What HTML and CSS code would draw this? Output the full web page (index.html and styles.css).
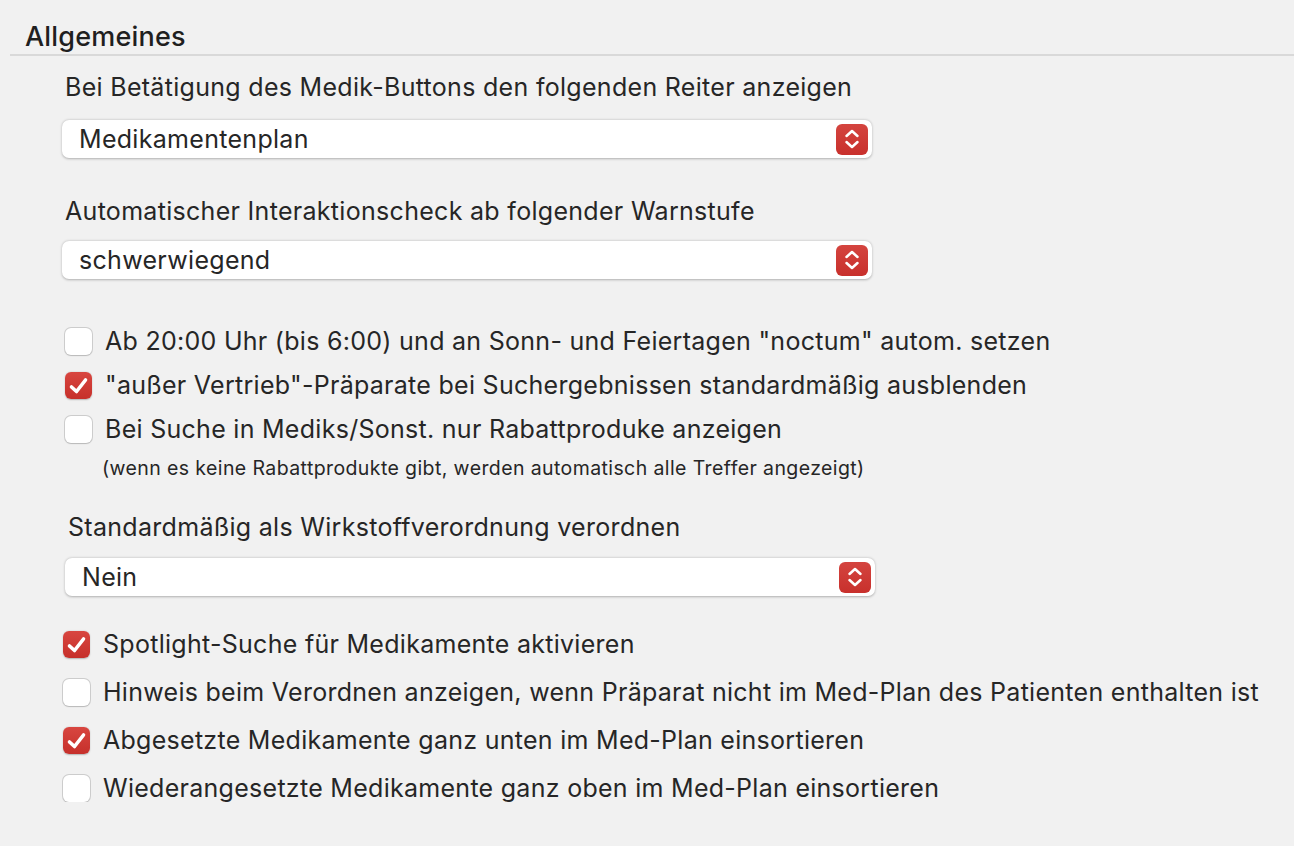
FILE: index.html
```html
<!DOCTYPE html>
<html lang="de">
  <head>
    <meta charset="UTF-8" />
    <title>Allgemeines</title>
    <link rel="stylesheet" href="styles.css">
  </head>
  <body>
    <div class="section">
      <h1 class="section-title">Allgemeines</h1>

      <div class="content">
        <div class="field first">
          <div class="label">Bei Betätigung des Medik-Buttons den folgenden Reiter anzeigen</div>
          <div class="popup">
            <span class="popup-value">Medikamentenplan</span>
            <span class="stepper">
              <svg width="18" height="22" viewBox="0 0 18 22"><path d="M3.5 8 L9 3 L14.5 8 M3.5 14 L9 19 L14.5 14" fill="none" stroke="#fff" stroke-width="2.5" stroke-linecap="round" stroke-linejoin="round"/></svg>
            </span>
          </div>
        </div>

        <div class="field second">
          <div class="label">Automatischer Interaktionscheck ab folgender Warnstufe</div>
          <div class="popup">
            <span class="popup-value">schwerwiegend</span>
            <span class="stepper">
              <svg width="18" height="22" viewBox="0 0 18 22"><path d="M3.5 8 L9 3 L14.5 8 M3.5 14 L9 19 L14.5 14" fill="none" stroke="#fff" stroke-width="2.5" stroke-linecap="round" stroke-linejoin="round"/></svg>
            </span>
          </div>
        </div>

        <!-- first checkbox group -->
        <div class="checks group-a">
          <label class="check">
            <span class="box"></span>
            <span>Ab 20:00 Uhr (bis 6:00) und an Sonn- und Feiertagen "noctum" autom. setzen</span>
          </label>
          <label class="check">
            <span class="box checked">
              <svg width="21" height="18" viewBox="0 0 21 18"><path d="M3.5 10 L8.5 14.5 L17.5 3" fill="none" stroke="#fff" stroke-width="3.6" stroke-linecap="round" stroke-linejoin="round"/></svg>
            </span>
            <span>"außer Vertrieb"-Präparate bei Suchergebnissen standardmäßig ausblenden</span>
          </label>
          <label class="check">
            <span class="box"></span>
            <span>Bei Suche in Mediks/Sonst. nur Rabattproduke anzeigen</span>
          </label>
          <div class="note">(wenn es keine Rabattprodukte gibt, werden automatisch alle Treffer angezeigt)</div>
        </div>

        <div class="field third">
          <div class="label">Standardmäßig als Wirkstoffverordnung verordnen</div>
          <div class="popup">
            <span class="popup-value">Nein</span>
            <span class="stepper">
              <svg width="18" height="22" viewBox="0 0 18 22"><path d="M3.5 8 L9 3 L14.5 8 M3.5 14 L9 19 L14.5 14" fill="none" stroke="#fff" stroke-width="2.5" stroke-linecap="round" stroke-linejoin="round"/></svg>
            </span>
          </div>
        </div>

        <!-- second checkbox group -->
        <div class="checks group-b">
          <label class="check">
            <span class="box checked">
              <svg width="21" height="18" viewBox="0 0 21 18"><path d="M3.5 10 L8.5 14.5 L17.5 3" fill="none" stroke="#fff" stroke-width="3.6" stroke-linecap="round" stroke-linejoin="round"/></svg>
            </span>
            <span>Spotlight-Suche für Medikamente aktivieren</span>
          </label>
          <label class="check">
            <span class="box"></span>
            <span>Hinweis beim Verordnen anzeigen, wenn Präparat nicht im Med-Plan des Patienten enthalten ist</span>
          </label>
          <label class="check">
            <span class="box checked">
              <svg width="21" height="18" viewBox="0 0 21 18"><path d="M3.5 10 L8.5 14.5 L17.5 3" fill="none" stroke="#fff" stroke-width="3.6" stroke-linecap="round" stroke-linejoin="round"/></svg>
            </span>
            <span>Abgesetzte Medikamente ganz unten im Med-Plan einsortieren</span>
          </label>
          <label class="check">
            <span class="box"></span>
            <span>Wiederangesetzte Medikamente ganz oben im Med-Plan einsortieren</span>
          </label>
        </div>
      </div>
    </div>
  </body>
</html>
```

FILE: styles.css
```css
body {
  margin: 0;
  background: #f1f1f1;
  font-family: Inter, "Noto Sans", sans-serif;
  color: #262626;
  overflow: hidden;
}

.section {
  margin-left: 10px;
}

.section-title {
  margin: 0;
  padding: 23px 0 3px 15px;
  font-size: 27px;
  font-weight: 500;
  line-height: 28px;
  letter-spacing: 0.2px;
  color: #1f1f1f;
  border-bottom: 2px solid #d9d9d9;
}

.content {
  padding-left: 55px;
  display: flex;
  flex-direction: column;
  font-size: 25px;
  letter-spacing: 0.3px;
}

/* Label + popup button */
.field {
  display: flex;
  flex-direction: column;
}

.field.first {
  margin-top: 17px;
}

.field.second {
  margin-top: 39px;
}

.field.third {
  margin-top: 34px;
  padding-left: 3px;
}

.label {
  line-height: 28px;
  margin-bottom: 19px;
}

.field.second .label {
  margin-bottom: 16px;
}

.field.third .label {
  margin-bottom: 17px;
}

.popup {
  margin-left: -3px;
  width: 810px;
  height: 38px;
  box-sizing: border-box;
  padding: 0 4px 0 17px;
  background: #fff;
  border-radius: 7px;
  box-shadow: 0 0.5px 2.5px rgba(0, 0, 0, 0.28);
  display: flex;
  align-items: center;
  justify-content: space-between;
}

.stepper {
  width: 32px;
  height: 31px;
  border-radius: 6px;
  background: linear-gradient(#d4443f, #c8302c);
  display: flex;
  align-items: center;
  justify-content: center;
}

.stepper svg {
  display: block;
}

/* Checkboxes */
.checks {
  display: flex;
  flex-direction: column;
}

.group-a {
  margin-top: 49px;
  gap: 17px;
}

.group-b {
  margin-top: 35px;
  gap: 21px;
  margin-left: -2px;
}

.check {
  display: flex;
  align-items: center;
  gap: 13px;
  line-height: 27px;
  letter-spacing: 0.28px;
}

.box {
  width: 27px;
  height: 27px;
  box-sizing: border-box;
  border-radius: 6px;
  background: #fff;
  box-shadow: 0 0 0 1px rgba(0, 0, 0, 0.13), 0 0.5px 1.5px rgba(0, 0, 0, 0.12);
  display: flex;
  align-items: center;
  justify-content: center;
  flex-shrink: 0;
}

.box.checked {
  background: linear-gradient(#d84640, #c6302b);
  box-shadow: 0 0.5px 1.5px rgba(0, 0, 0, 0.25);
}

.note {
  margin-top: -3px;
  padding-left: 37px;
  font-size: 19.5px;
  letter-spacing: 0.4px;
  line-height: 22px;
}
```
